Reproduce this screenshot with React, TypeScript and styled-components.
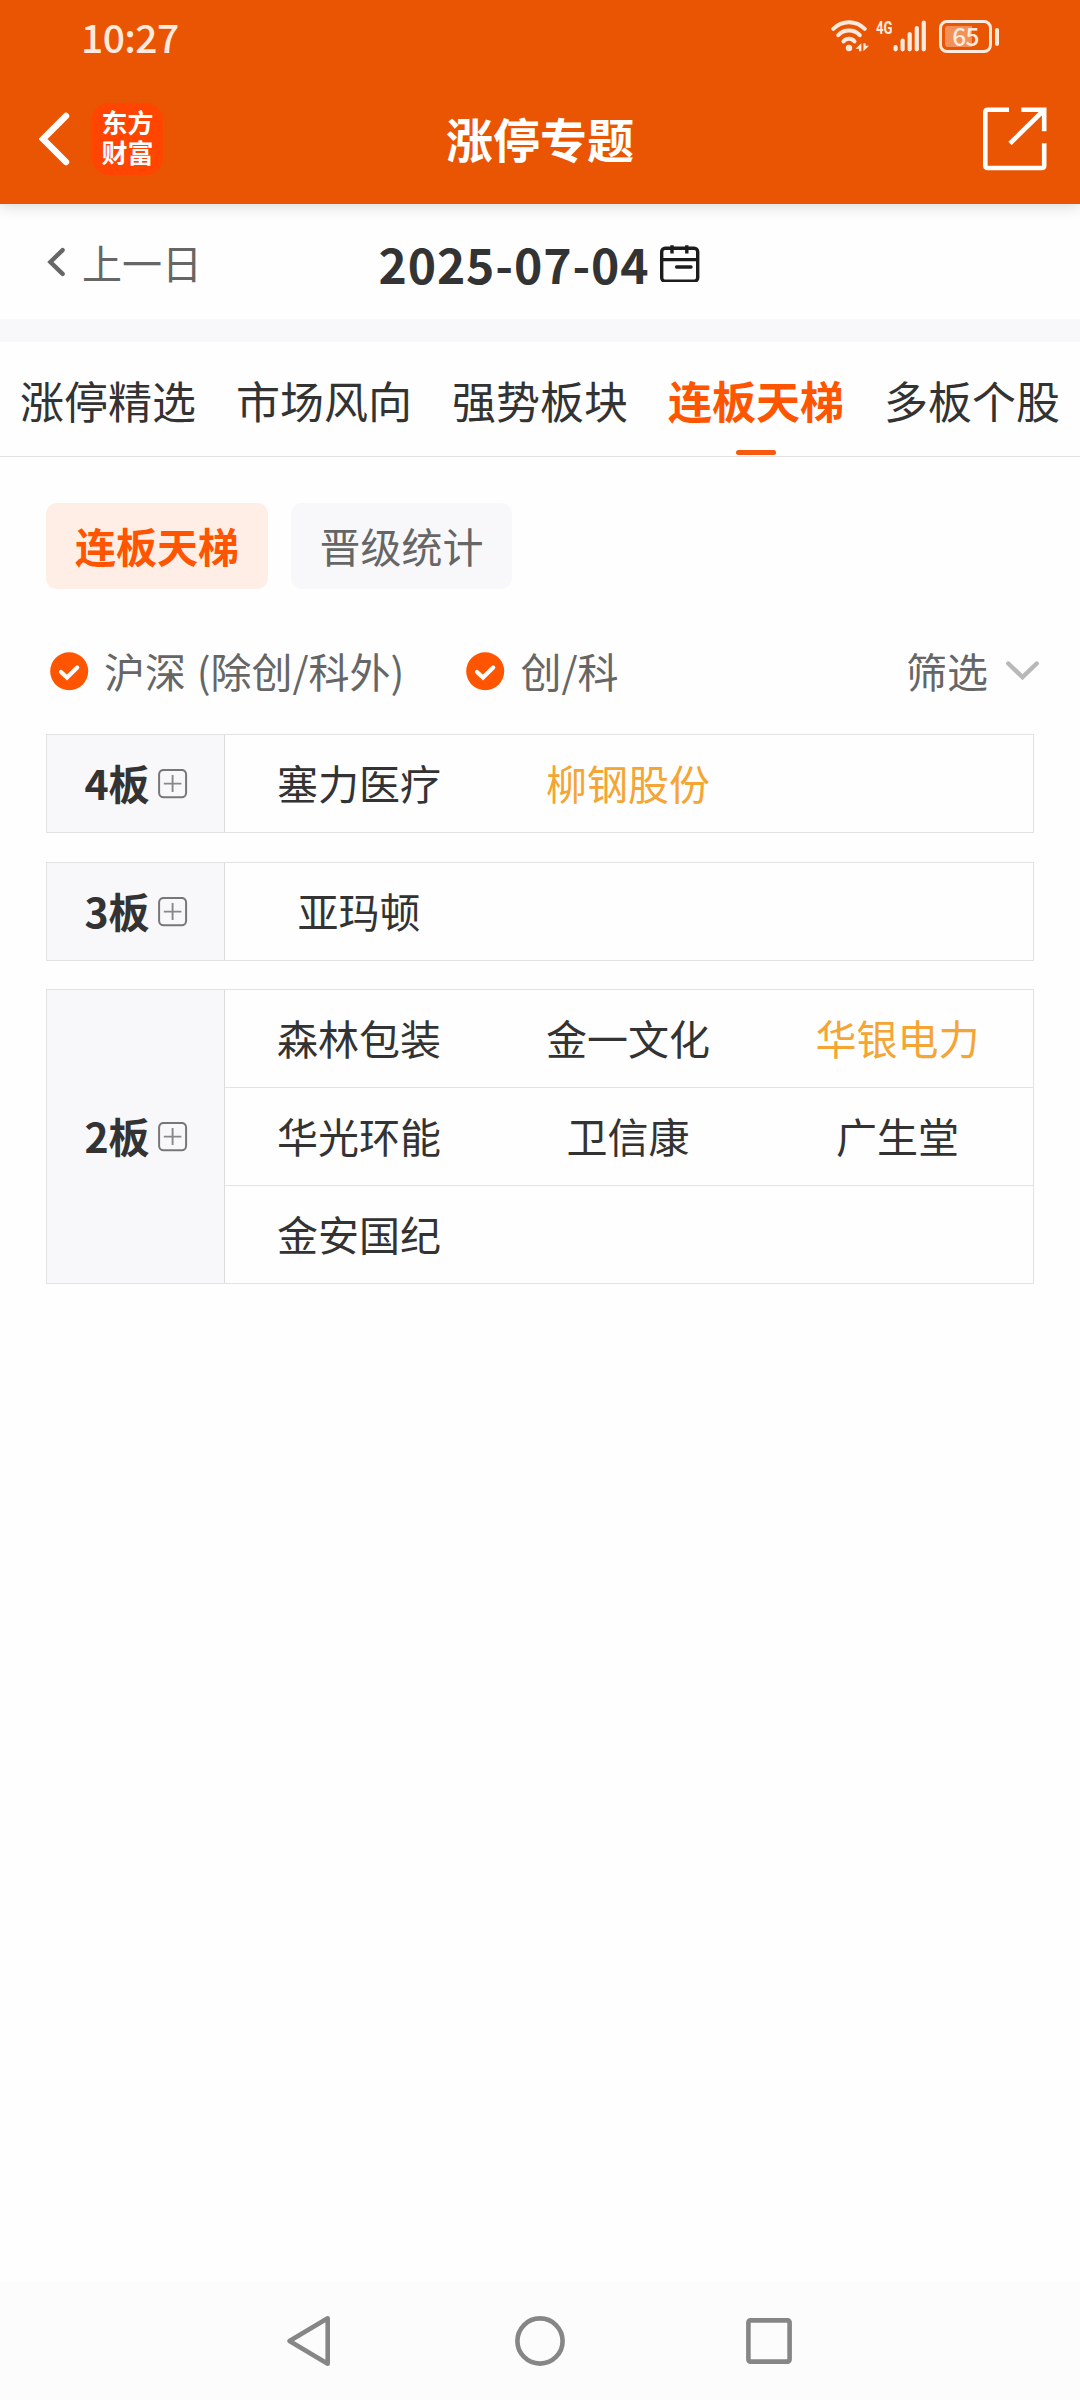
import React from "react";
import styled, { createGlobalStyle } from "styled-components";

const ORANGE = "#ff5500";
const STATUS_INK = "#ffeade";

const GlobalStyle = createGlobalStyle`
  *, *::before, *::after { box-sizing: border-box; }
  body {
    margin: 0;
    background: #fefefe;
    font-family: "Noto Sans CJK SC", "Noto Sans", sans-serif;
    color: #333;
  }
  svg { display: block; flex: none; }
`;

const Screen = styled.div`
  width: 1080px;
  height: 2400px;
  display: flex;
  flex-direction: column;
  background: #fefefe;
  overflow: hidden;
  white-space: nowrap;
`;

const TopArea = styled.header`
  flex: none;
  height: 204px;
  background: #ea5503;
  box-shadow: 0 2px 14px rgba(0, 0, 0, 0.16);
  display: flex;
  flex-direction: column;
  z-index: 1;
`;

const StatusBar = styled.div`
  height: 74px;
  padding: 0 81px 0 81px;
  display: flex;
  justify-content: space-between;
  color: ${STATUS_INK};
`;

const Clock = styled.div`
  font-size: 39px;
  font-weight: 500;
  line-height: 72px;
  letter-spacing: -0.6px;
`;

const StatusIcons = styled.div`
  display: flex;
  padding-top: 20px;
`;

const Signal = styled.div`
  display: flex;
  margin-left: 7px;
`;

const NetworkType = styled.div`
  width: 17px;
  height: 16px;
  font-family: "Roboto", "Noto Sans", sans-serif;
  font-size: 18px;
  font-weight: 700;
  line-height: 16px;
  transform: scaleX(0.73);
  transform-origin: left center;
`;

const Battery = styled.div`
  display: flex;
  align-items: center;
  gap: 3px;
  height: 33px;
  margin-left: 12px;
`;

const BatteryShell = styled.div`
  width: 53px;
  height: 33px;
  padding: 3px;
  border: 3px solid ${STATUS_INK};
  border-radius: 8px;
`;

const BatteryLevel = styled.div<{ $level: number }>`
  height: 21px;
  border-radius: 3px;
  background: linear-gradient(
    to right,
    rgba(255, 234, 222, 0.4) ${(p) => p.$level}%,
    transparent ${(p) => p.$level}%
  );
  display: flex;
  align-items: center;
  justify-content: center;
  padding-bottom: 2px;
  font-size: 24.5px;
  font-weight: 500;
  line-height: 19px;
  letter-spacing: -0.6px;
`;

const BatteryTip = styled.div`
  width: 4px;
  height: 18px;
  border-radius: 2px;
  background: ${STATUS_INK};
`;

const NavBar = styled.div`
  height: 130px;
  padding: 0 33px 0 39px;
  display: grid;
  grid-template-columns: 1fr auto 1fr;
  align-items: center;
`;

const NavLeft = styled.div`
  display: flex;
  align-items: center;
  gap: 22px;
`;

const Logo = styled.div`
  width: 71px;
  height: 72px;
  padding: 4px 9px 0;
  border-radius: 17px;
  background: #ff4500;
  color: #fff;
  font-size: 26px;
  font-weight: 700;
  line-height: 30px;
  text-align: center;
  white-space: normal;
`;

const Title = styled.h1`
  margin: 0 0 2px -6px;
  font-size: 47px;
  font-weight: 700;
  line-height: 60px;
  color: #fff;
`;

const NavRight = styled.div`
  display: flex;
  justify-content: flex-end;
`;

const DateBar = styled.div`
  flex: none;
  height: 115px;
  padding: 0 46px;
  display: grid;
  grid-template-columns: 1fr auto 1fr;
  align-items: center;
`;

const PrevDay = styled.div`
  display: flex;
  align-items: center;
  gap: 16px;
  font-size: 40px;
  line-height: 50px;
  color: #666;
`;

const CurrentDate = styled.div`
  display: flex;
  align-items: center;
  gap: 10px;
  margin-left: -2px;
  font-size: 48px;
  font-weight: 700;
  line-height: 60px;
  letter-spacing: 0.9px;
`;

const DateText = styled.span`
  padding-top: 2px;
`;

const Divider = styled.div`
  flex: none;
  height: 23px;
  background: #f8f8fa;
`;

const Tabs = styled.nav`
  flex: none;
  height: 115px;
  display: grid;
  grid-template-columns: repeat(5, 216px);
  border-bottom: 1px solid #e3e3e3;
`;

const Tab = styled.div<{ $active?: boolean }>`
  display: flex;
  flex-direction: column;
  align-items: center;
  justify-content: space-between;
  padding: 28px 0 1px;
  font-size: 44px;
  line-height: 60px;
  font-weight: ${(p) => (p.$active ? 700 : 400)};
  color: ${(p) => (p.$active ? ORANGE : "#333")};
  &::after {
    content: "";
    width: 40px;
    height: 5px;
    border-radius: 3px;
    background: ${(p) => (p.$active ? "#f75a0e" : "transparent")};
  }
`;

const Chips = styled.div`
  flex: none;
  display: flex;
  gap: 23px;
  padding: 46px 46px 0;
`;

const Chip = styled.div<{ $active?: boolean }>`
  width: ${(p) => (p.$active ? 222 : 221)}px;
  height: 86px;
  border-radius: 11px;
  text-align: center;
  font-size: 41px;
  line-height: 85px;
  font-weight: ${(p) => (p.$active ? 700 : 400)};
  color: ${(p) => (p.$active ? ORANGE : "#666")};
  background: ${(p) => (p.$active ? "#ffeee6" : "#f8f8fa")};
`;

const Filters = styled.div`
  flex: none;
  height: 145px;
  padding: 19px 41px 0 50px;
  display: flex;
  align-items: center;
  font-size: 41px;
  line-height: 60px;
  color: #666;
`;

const FilterLabel = styled.span`
  padding-bottom: 2px;
  word-spacing: 1.5px;
`;

const CheckOption = styled.div`
  display: flex;
  align-items: center;
  gap: 15px;
  margin-right: 62px;
`;

const FilterMenu = styled.div`
  display: flex;
  align-items: center;
  gap: 18px;
  margin-left: auto;
`;

const Ladder = styled.main`
  flex: 1;
  padding: 0 46px;
  display: flex;
  flex-direction: column;
`;

const Level = styled.section<{ $gap: number }>`
  display: flex;
  border: 1px solid #e3e3e5;
  margin-bottom: ${(p) => p.$gap}px;
`;

const LevelName = styled.div`
  width: 178px;
  padding-left: 1px;
  border-right: 1px solid #dcdcdf;
  background: #f8f8fa;
  display: flex;
  align-items: center;
  justify-content: center;
  gap: 8px;
  font-size: 41px;
  font-weight: 700;
  line-height: 60px;
`;

const LevelText = styled.span`
  padding-bottom: 3px;
`;

const Rows = styled.div`
  flex: 1;
`;

const Row = styled.div`
  height: 98px;
  padding-bottom: 3px;
  display: grid;
  grid-template-columns: 268px 270px 269px;
  align-items: center;
  border-bottom: 1px solid #e3e3e5;
  &:last-child {
    height: 97px;
    border-bottom: none;
  }
`;

const Stock = styled.div<{ $highlight?: boolean }>`
  text-align: center;
  font-size: 41px;
  line-height: 60px;
  color: ${(p) => (p.$highlight ? "#f5a533" : "#333")};
`;

const SystemNav = styled.footer`
  flex: none;
  height: 118px;
  padding: 0 288px 0 286px;
  background: #fcfcfc;
  display: flex;
  align-items: center;
  justify-content: space-between;
`;

const WifiIcon = () => (
  <svg width="38" height="33" viewBox="0 0 38 33" fill="none" stroke={STATUS_INK} strokeWidth="4" strokeLinecap="round">
    <path d="M2.3 8.8C11 0 25 0 33.7 8.8" />
    <path d="M7.2 15.2C13 8.8 23 8.8 28.8 15.2" />
    <path d="M12.5 21.4C15.5 18 20.5 18 23.5 21.4" />
    <circle cx="18" cy="28" r="3.2" fill={STATUS_INK} stroke="none" />
    <path d="M30.4 23.2V31.2H28V28.8H24.6ZM32.4 23.2V31.2L38 25.8H34.6V23.2Z" fill={STATUS_INK} stroke="none" />
  </svg>
);

const bars = [
  { x: 0.5, top: 25 },
  { x: 7.5, top: 18.5 },
  { x: 14.6, top: 12 },
  { x: 21.7, top: 6 },
  { x: 28.7, top: 0.6 },
];

const SignalIcon = () => (
  <svg width="34" height="33" viewBox="0 0 34 33" fill={STATUS_INK}>
    {bars.map((b) => (
      <rect key={b.x} x={b.x} y={b.top} width="4.2" height={31.4 - b.top} rx="2.1" />
    ))}
  </svg>
);

const BackIcon = () => (
  <svg width="31" height="54" viewBox="0 0 31 54" fill="none" stroke="#fff" strokeWidth="6.4" strokeLinecap="round">
    <path d="M27 4L4 27L27 50" strokeLinejoin="miter" />
  </svg>
);

const ShareIcon = () => (
  <svg width="64" height="64" viewBox="0 0 64 64" fill="none" stroke="#fff" strokeWidth="4.6">
    <path d="M26 2.8H4.8Q2.3 2.8 2.3 5.3V58.5Q2.3 61 4.8 61H58.7Q61.2 61 61.2 58.5V36.3" />
    <path d="M38.3 2.8H61.2V24.3M60.5 3.5L27 36.5" />
  </svg>
);

const PrevIcon = () => (
  <svg width="20" height="30" viewBox="0 0 20 30" fill="none" stroke="#666" strokeWidth="4.4" strokeLinecap="round">
    <path d="M16.6 3.1L4.4 15L16.6 26.9" />
  </svg>
);

const CalendarIcon = () => (
  <svg width="40" height="40" viewBox="0 0 40 40" fill="none" stroke="#1c1c1c" strokeWidth="3.4">
    <rect x="1.7" y="7" width="36" height="33" rx="3.5" transform="translate(0 -0.8)" />
    <path d="M1.7 17.6H37.7M12 3.2V11.6M26.8 3.2V11.6" />
    <path d="M16.6 25H31" strokeLinecap="round" />
  </svg>
);

const CheckIcon = () => (
  <svg width="39" height="39" viewBox="0 0 39 39">
    <circle cx="19.2" cy="19.2" r="19" fill={ORANGE} />
    <path d="M11 20L17 25.5L27.2 15.4" fill="none" stroke="#fff" strokeWidth="4.2" strokeLinecap="round" />
  </svg>
);

const DownIcon = () => (
  <svg width="33" height="20" viewBox="0 0 33 20" fill="none" stroke="#b8b8b8" strokeWidth="4.4" strokeLinecap="round">
    <path d="M2.3 2.5L16.5 16.2L30.7 2.5" />
  </svg>
);

const PlusIcon = () => (
  <svg width="30" height="30" viewBox="0 0 30 30" fill="none" stroke="#777" strokeWidth="2">
    <rect x="1.1" y="0.9" width="27" height="27.4" rx="4.5" />
    <path d="M5.8 14.6H23.4M14.6 6.1V23.1" strokeWidth="1.9" stroke="#888" />
  </svg>
);

const levels = [
  { name: "4板", gap: 29, rows: [["塞力医疗", "柳钢股份"]] },
  { name: "3板", gap: 28, rows: [["亚玛顿"]] },
  {
    name: "2板",
    gap: 0,
    rows: [
      ["森林包装", "金一文化", "华银电力"],
      ["华光环能", "卫信康", "广生堂"],
      ["金安国纪"],
    ],
  },
];

const highlighted = new Set(["柳钢股份", "华银电力"]);
const tabs = ["涨停精选", "市场风向", "强势板块", "连板天梯", "多板个股"];

export default function App() {
  return (
    <Screen>
      <GlobalStyle />
      <TopArea>
        <StatusBar>
          <Clock>10:27</Clock>
          <StatusIcons>
            <WifiIcon />
            <Signal>
              <NetworkType>4G</NetworkType>
              <SignalIcon />
            </Signal>
            <Battery>
              <BatteryShell>
                <BatteryLevel $level={67}>65</BatteryLevel>
              </BatteryShell>
              <BatteryTip />
            </Battery>
          </StatusIcons>
        </StatusBar>
        <NavBar>
          <NavLeft>
            <BackIcon />
            <Logo>东方财富</Logo>
          </NavLeft>
          <Title>涨停专题</Title>
          <NavRight>
            <ShareIcon />
          </NavRight>
        </NavBar>
      </TopArea>
      <DateBar>
        <PrevDay>
          <PrevIcon />
          上一日
        </PrevDay>
        <CurrentDate>
          <DateText>2025-07-04</DateText>
          <CalendarIcon />
        </CurrentDate>
      </DateBar>
      <Divider />
      <Tabs>
        {tabs.map((t) => (
          <Tab key={t} $active={t === "连板天梯"}>
            {t}
          </Tab>
        ))}
      </Tabs>
      <Chips>
        <Chip $active>连板天梯</Chip>
        <Chip>晋级统计</Chip>
      </Chips>
      <Filters>
        <CheckOption>
          <CheckIcon />
          <FilterLabel>沪深 (除创/科外)</FilterLabel>
        </CheckOption>
        <CheckOption>
          <CheckIcon />
          <FilterLabel>创/科</FilterLabel>
        </CheckOption>
        <FilterMenu>
          <FilterLabel>筛选</FilterLabel>
          <DownIcon />
        </FilterMenu>
      </Filters>
      <Ladder>
        {levels.map((level) => (
          <Level key={level.name} $gap={level.gap}>
            <LevelName>
              <LevelText>{level.name}</LevelText>
              <PlusIcon />
            </LevelName>
            <Rows>
              {level.rows.map((row) => (
                <Row key={row[0]}>
                  {row.map((name) => (
                    <Stock key={name} $highlight={highlighted.has(name)}>
                      {name}
                    </Stock>
                  ))}
                </Row>
              ))}
            </Rows>
          </Level>
        ))}
      </Ladder>
      <SystemNav>
        <svg width="48" height="52" viewBox="0 0 48 52" fill="none" stroke="#868686" strokeWidth="4.6" strokeLinejoin="round">
          <path d="M41.7 3.3V48.7L3.5 26Z" />
        </svg>
        <svg width="50" height="50" viewBox="0 0 50 50" fill="none" stroke="#868686" strokeWidth="4.6">
          <circle cx="25" cy="25" r="22.6" />
        </svg>
        <svg width="46" height="46" viewBox="0 0 46 46" fill="none" stroke="#868686" strokeWidth="4.6">
          <rect x="2.4" y="2.4" width="41.2" height="41.2" rx="2" />
        </svg>
      </SystemNav>
    </Screen>
  );
}
